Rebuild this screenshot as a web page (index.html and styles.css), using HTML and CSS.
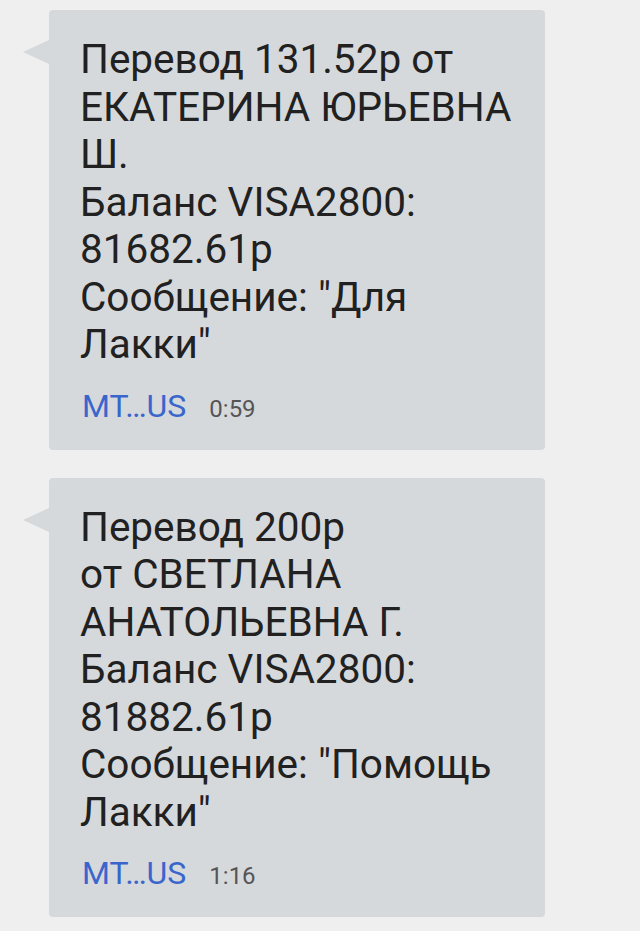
FILE: index.html
```html
<html><head><link rel="stylesheet" href="styles.css"></head><body>
  <main class="thread">
    <div class="bubble">
      <p class="body">Перевод 131.52р от<br>ЕКАТЕРИНА ЮРЬЕВНА<br>Ш.<br>Баланс VISA2800:<br>81682.61р<br>Сообщение: "Для<br>Лакки"</p>
      <div class="meta">
        <span class="sender">MT…US</span>
        <span class="time">0:59</span>
      </div>
    </div>
    <div class="bubble">
      <p class="body">Перевод 200р<br>от СВЕТЛАНА<br>АНАТОЛЬЕВНА Г.<br>Баланс VISA2800:<br>81882.61р<br>Сообщение: "Помощь<br>Лакки"</p>
      <div class="meta">
        <span class="sender">MT…US</span>
        <span class="time">1:16</span>
      </div>
    </div>
  </main>
</body></html>
```

FILE: styles.css
```css
body {
  font-family: Roboto, 'Noto Sans', Arial, sans-serif;
  background: #efefef;
  color: #222;
  margin: 0;
  padding: 0;
}
.thread {
  display: flex;
  flex-direction: column;
  gap: 28px;
  padding: 10px 0 0 49px;
}
.bubble {
  position: relative;
  width: 496px;
  box-sizing: border-box;
  background: #d6d9dc;
  border-radius: 4px;
  padding: 26px 20px 24px 31px;
}
/* little tail on the left */
.bubble::before {
  content: "";
  position: absolute;
  left: -26px;
  top: 30px;
  border-style: solid;
  border-width: 12px 26px 12px 0;
  border-color: transparent #d6d9dc transparent transparent;
}
.body {
  margin: 0;
  font-size: 40.5px;
  line-height: 47.5px;
  color: #212121;
  white-space: nowrap;
}
.meta {
  display: flex;
  align-items: baseline;
  gap: 23px;
  margin-top: 17px;
  padding-left: 2px;
  height: 40px;
  line-height: 40px;
}
.sender {
  color: #3a66cc;
  font-size: 32px;
}
.time {
  color: #555;
  font-size: 24px;
}
```
